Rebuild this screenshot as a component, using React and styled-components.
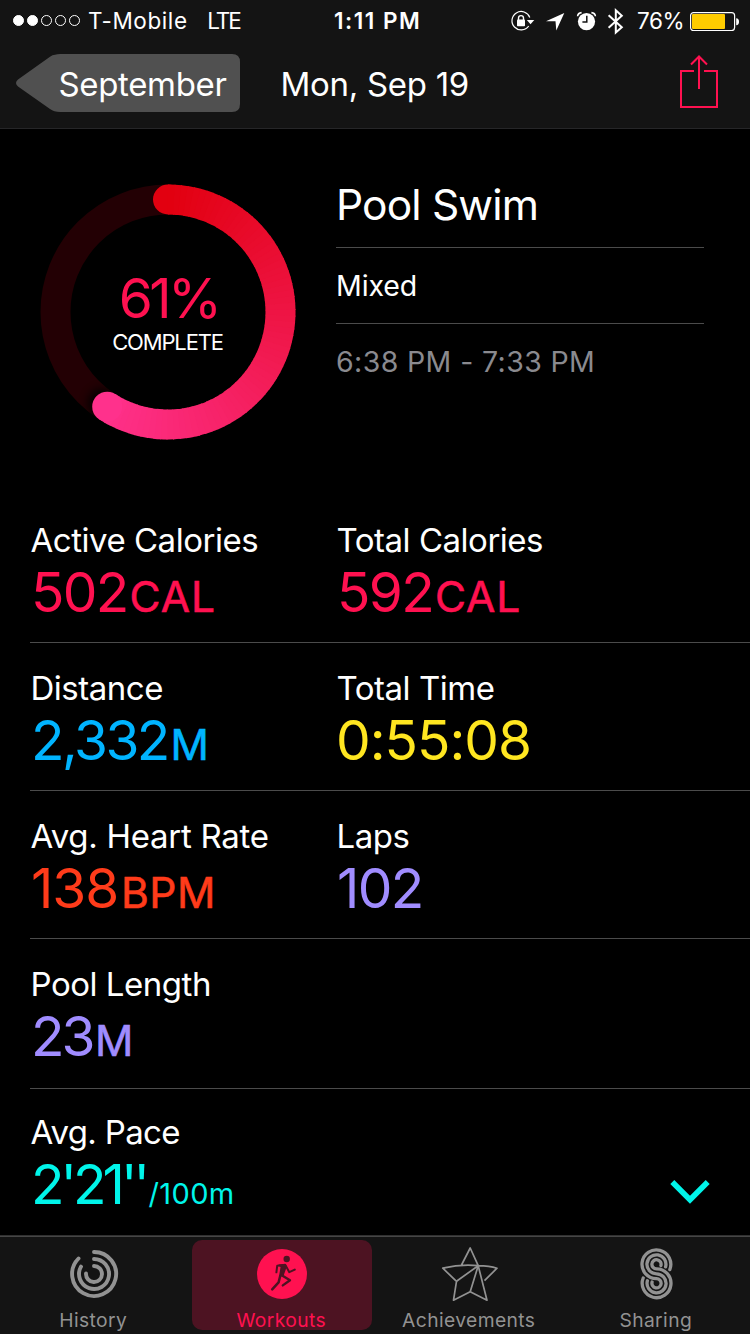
import React from 'react';
import styled, { createGlobalStyle } from 'styled-components';

const GlobalStyle = createGlobalStyle`
  *, *::before, *::after { box-sizing: border-box; }
  body {
    margin: 0;
    background: #000;
    color: #fff;
    font-family: Inter, 'Liberation Sans', sans-serif;
  }
  svg { display: block; flex: none; }
`;

const Screen = styled.div`
  width: 750px;
  height: 1334px;
  display: flex;
  flex-direction: column;
  background: #000;
  overflow: hidden;
  white-space: nowrap;
`;

const Header = styled.header`
  height: 129px;
  background: #141414;
  border-bottom: 1px solid #262628;
`;

const StatusBar = styled.div`
  height: 40px;
  display: grid;
  grid-template-columns: 334px 1fr 240px;
  align-items: center;
  font-size: 22.5px;
  line-height: 40px;
`;

const Carrier = styled.div`
  display: flex;
  align-items: center;
  padding-left: 13px;
`;

const Signal = styled.div`
  display: flex;
  gap: 3px;
  margin-right: 8px;
`;

const Dot = styled.span`
  width: 11px;
  height: 11px;
  border-radius: 50%;
  border: 1px solid #fff;
  background: ${(p) => (p.$on ? '#fff' : 'transparent')};
`;

const StatusText = styled.span`
  padding-top: 1px;
  letter-spacing: ${(p) => p.$spacing || 0}px;
  font-weight: ${(p) => p.$weight || 400};
  margin-left: ${(p) => p.$left || 0}px;
`;

const StatusIcons = styled.div`
  display: flex;
  align-items: center;
`;

const NavBar = styled.nav`
  height: 88px;
  display: flex;
  align-items: flex-start;
  padding: 14px 30px 0 16px;
  font-size: 33px;
  line-height: 60px;
`;

const BackButton = styled.button`
  width: 224px;
  height: 58px;
  padding: 0 0 0 42.5px;
  border: 0;
  background: #505050;
  color: #fff;
  font: inherit;
  line-height: 60px;
  letter-spacing: -0.35px;
  text-align: left;
  clip-path: path('M39 0.8 Q41.5 0 44 0 H216 Q224 0 224 8 V50 Q224 58 216 58 H44 Q38 58 34 55 L2 32.5 Q-2 29 2 25.5 L34 2.8 Q36.5 1 39 0.8 Z');
`;

const NavTitle = styled.h1`
  margin: 0 auto 0 40.6px;
  font: inherit;
  font-weight: 400;
  letter-spacing: -0.3px;
`;

const Hero = styled.section`
  height: 366px;
  display: flex;
  padding: 55px 46px 0 40px;
`;

const RingBox = styled.div`
  width: 256px;
  height: 256px;
  margin-right: 40px;
  display: grid;
  > * { grid-area: 1 / 1; }
`;

const RingText = styled.div`
  display: flex;
  flex-direction: column;
  align-items: center;
  padding-top: 82px;
  z-index: 1;
`;

const Percent = styled.div`
  padding-left: 1px;
  color: #ff1150;
  font-size: 55px;
  font-weight: 400;
  line-height: 64px;
  letter-spacing: -3.6px;
`;

const Complete = styled.div`
  padding-right: 1px;
  font-size: 22px;
  line-height: 24px;
  letter-spacing: -1.15px;
`;

const Summary = styled.div`
  flex: 1;
`;

const SummaryLine = styled.div`
  height: ${(p) => p.$height}px;
  padding-top: ${(p) => p.$top}px;
  border-bottom: ${(p) => (p.$last ? '0' : '1px solid #4b4b4b')};
  color: ${(p) => p.$color || '#fff'};
  font-size: ${(p) => p.$size}px;
  line-height: 40px;
  letter-spacing: ${(p) => p.$spacing}px;
`;

const Metrics = styled.main`
  padding-left: 30px;
  height: 740px;
`;

const MetricRow = styled.section`
  height: ${(p) => p.$height || 148}px;
  margin-top: ${(p) => p.$shift || 0}px;
  padding-top: 25px;
  border-bottom: ${(p) => (p.$last ? '0' : '1px solid #4b4b4b')};
  display: grid;
  grid-template-columns: 306px 1fr;
`;

const Label = styled.div`
  padding-left: 0.5px;
  font-size: 33px;
  line-height: 40px;
  letter-spacing: ${(p) => p.$spacing ?? -0.48}px;
`;

const Value = styled.div`
  margin-top: 4px;
  padding-left: ${(p) => p.$indent ?? 1}px;
  color: ${(p) => p.$color};
  font-size: 55px;
  font-weight: 400;
  line-height: 56px;
  letter-spacing: ${(p) => p.$spacing || 0}px;
`;

const Unit = styled.span`
  margin-left: ${(p) => p.$gap || 0}px;
  font-size: ${(p) => (p.$small ? 29 : 42.5)}px;
  font-weight: 400;
  -webkit-text-stroke: ${(p) => (p.$small ? 0 : 0.6)}px currentColor;
  letter-spacing: ${(p) => p.$spacing || 0}px;
`;

const PaceRow = styled(MetricRow)`
  grid-template-columns: 1fr auto;
  padding-right: 38px;
`;

const Chevron = styled.svg`
  margin-top: 64px;
`;

const TabBar = styled.footer`
  height: 99px;
  background: #141414;
  border-top: 1px solid #303030;
  box-shadow: inset 0 1px 0 #464646;
  display: grid;
  grid-template-columns: 188px 188px 187px 187px;
  justify-items: center;
  padding-top: 4px;
`;

const Tab = styled.div`
  width: 180px;
  height: 90px;
  border-radius: 10px;
  padding-top: 4px;
  display: flex;
  flex-direction: column;
  align-items: center;
  background: ${(p) => (p.$active ? '#4d1322' : 'transparent')};
  color: ${(p) => (p.$active ? '#ff1150' : '#929292')};
`;

const TabLabel = styled.span`
  margin: 4px 1.5px 0 0;
  font-size: 19.25px;
  line-height: 24px;
  letter-spacing: 0.4px;
`;

const START = [226, 0, 16];
const END = [255, 49, 140];
const SWEEP = 212.7;
const STEPS = 72;

const polar = (deg, r = 112.5) => {
  const a = ((deg - 90) * Math.PI) / 180;
  return [128 + r * Math.cos(a), 128 + r * Math.sin(a)];
};
const mix = (t) => `rgb(${START.map((s, i) => Math.round(s + (END[i] - s) * t)).join(',')})`;

function Ring() {
  const step = SWEEP / STEPS;
  const [ex, ey] = polar(SWEEP);
  const [sx, sy] = polar(SWEEP + 3);
  return (
    <svg width="256" height="256" viewBox="0 0 256 256">
      <defs>
        <filter id="soft" x="-50%" y="-50%" width="200%" height="200%">
          <feGaussianBlur stdDeviation="4" />
        </filter>
        <clipPath id="disc"><circle cx="128" cy="128" r="127.5" /></clipPath>
      </defs>
      <circle cx="128" cy="128" r="112.5" fill="none" stroke="#230004" strokeWidth="30" />
      <g clipPath="url(#disc)">
        <circle cx={sx} cy={sy} r="15" fill="#000" opacity="0.8" filter="url(#soft)" />
      </g>
      <circle cx="128" cy="15.5" r="15" fill={mix(0)} />
      {Array.from({ length: STEPS }, (_, i) => {
        const [x1, y1] = polar(i * step);
        const [x2, y2] = polar(Math.min(SWEEP, (i + 1) * step + 0.5));
        return (
          <path key={i} d={`M${x1} ${y1}A112.5 112.5 0 0 1 ${x2} ${y2}`} fill="none" stroke={mix(i / STEPS)} strokeWidth="30" />
        );
      })}
      <circle cx={ex} cy={ey} r="15" fill={mix(1)} />
    </svg>
  );
}

const SystemIcons = () => (
  <svg width="116" height="40" viewBox="510 0 116 40" fill="none" stroke="#fff">
    <path d="M529.8 16.5A9.2 9.2 0 1 0 528.7 25" strokeWidth="1.2" />
    <path d="M526.8 19H534.3L530.5 23.2Z" fill="#fff" stroke="none" />
    <rect x="517" y="18.5" width="8" height="6.8" rx="0.8" fill="#fff" stroke="none" />
    <path d="M518.5 19V17Q518.5 14.6 521 14.6T523.5 17V19" strokeWidth="1.4" />
    <path d="M564.3 12L546 20.2H555.5L556.3 29.5Z" fill="#fff" stroke="none" />
    <circle cx="586.5" cy="20.6" r="8.6" fill="#fff" stroke="none" />
    <path d="M577.6 15.3Q577.8 12 581.6 11.6M591.4 11.6Q595.2 12 595.4 15.3" strokeWidth="1.6" />
    <path d="M586.8 14.8V21H582.4" stroke="#141414" strokeWidth="1.5" />
    <path d="M608.6 14.2L621.8 26.3L615.8 31.6V9.2L621.8 14.7L608.6 26.8" strokeWidth="2" />
  </svg>
);

const BatteryIcon = styled.svg`
  margin-left: 6px;
`;

const Battery = () => (
  <BatteryIcon width="50" height="20" viewBox="0 0 50 20">
    <rect x="0.6" y="1.6" width="44" height="18" rx="3" fill="none" stroke="#fff" strokeWidth="1.2" />
    <rect x="2" y="3.1" width="33" height="15" rx="1" fill="#fc0" />
    <path d="M46.2 7.2Q49 7.5 49 10.7T46.2 14.2Z" fill="#fff" />
  </BatteryIcon>
);

const ShareIcon = () => (
  <svg width="41" height="56" viewBox="679 54 41 56" fill="none" stroke="#ff1150" strokeWidth="2">
    <path d="M694 71H681V107H717V71H704M699 89V56.5M691 64.5L699 56.5L707 64.5" />
  </svg>
);

const HistoryIcon = () => (
  <svg width="60" height="60" viewBox="64 1244 60 60" fill="none" stroke="currentColor" strokeWidth="3.9" strokeLinecap="round">
    <path d="M94 1252A22 22 0 1 1 78.5 1258.5" />
    <path d="M94 1259A15 15 0 1 1 81 1266.6" />
    <path d="M94 1266A8 8 0 1 1 86 1273.5" />
  </svg>
);

const WorkoutIcon = () => (
  <svg width="60" height="60" viewBox="252 1244 60 60" fill="none" stroke="#4d1322" strokeWidth="2.2" strokeLinecap="round" strokeLinejoin="round">
    <circle cx="282" cy="1274" r="25" fill="currentColor" stroke="none" />
    <circle cx="286.7" cy="1259" r="3.2" fill="#4d1322" stroke="none" />
    <path d="M279 1265.3L285 1264.8L286 1266.5L283 1275L279.8 1276.2L281.5 1266.5Z" fill="#4d1322" strokeWidth="1.6" />
    <path d="M276.4 1272.3L277.2 1265.8L285.2 1264.8L289.3 1272.2L294.8 1269.6" strokeWidth="2" />
    <path d="M280.2 1276L278.6 1282.4L272.2 1289.4" strokeWidth="2.5" />
    <path d="M281.7 1275.2L290 1280.2L282.8 1285.4" strokeWidth="2.4" />
  </svg>
);

const AchievementsIcon = () => (
  <svg width="60" height="60" viewBox="439.5 1244 60 60" fill="none" stroke="currentColor" strokeWidth="1.7" strokeLinejoin="round">
    <path d="M461 1265L469.7 1248L477.7 1265.7L486.5 1300.2L469.7 1291.7L453 1300.2L456 1281.3L442.3 1268.2Q461 1263.8 477.7 1265.7Q489 1265.8 496.5 1268.2L484 1280.7" />
    <path d="M456 1281.3L477.7 1265.7L469.7 1291.7" />
  </svg>
);

const SharingIcon = () => (
  <svg width="60" height="60" viewBox="626.5 1244 60 60" fill="none" stroke="currentColor" strokeWidth="3.3" strokeLinecap="round">
    <path d="M669.3 1269.6A14.4 14.4 0 1 0 656 1278.7A4.6 4.6 0 1 1 651.6 1282" />
    <path d="M665.1 1266.8A9.5 9.5 0 1 0 656 1273.8A9.5 9.5 0 1 1 646.9 1280.8" />
    <path d="M660.4 1265.6A4.6 4.6 0 1 0 656 1268.9A14.4 14.4 0 1 1 642.7 1278" />
  </svg>
);

function Metric({ label, value, unit, color, labelSpacing, spacing, indent, unitGap, unitSpacing, small }) {
  return (
    <div>
      <Label $spacing={labelSpacing}>{label}</Label>
      <Value $color={color} $spacing={spacing} $indent={indent}>
        {value}
        {unit && <Unit $small={small} $gap={unitGap} $spacing={unitSpacing}>{unit}</Unit>}
      </Value>
    </div>
  );
}

export default function App() {
  return (
    <Screen>
      <GlobalStyle />
      <Header>
        <StatusBar>
          <Carrier>
            <Signal>
              <Dot $on /><Dot $on /><Dot /><Dot /><Dot />
            </Signal>
            <StatusText $spacing={0.6}>T-Mobile</StatusText>
            <StatusText $left={19.5} $spacing={-2}>LTE</StatusText>
          </Carrier>
          <StatusText $weight={600} $spacing={1.5}>1:11 PM</StatusText>
          <StatusIcons>
            <SystemIcons />
            <StatusText $left={11} $spacing={-0.4}>76%</StatusText>
            <Battery />
          </StatusIcons>
        </StatusBar>
        <NavBar>
          <BackButton>September</BackButton>
          <NavTitle>Mon, Sep 19</NavTitle>
          <ShareIcon />
        </NavBar>
      </Header>
      <Hero>
        <RingBox>
          <Ring />
          <RingText>
            <Percent>61%</Percent>
            <Complete>COMPLETE</Complete>
          </RingText>
        </RingBox>
        <Summary>
          <SummaryLine $height={64} $top={1} $size={42.5} $spacing={-0.85}>Pool Swim</SummaryLine>
          <SummaryLine $height={76} $top={18} $size={28.5} $spacing={-0.1}>Mixed</SummaryLine>
          <SummaryLine $height={76} $top={18} $size={28.5} $spacing={0.38} $color="#8a8a8f" $last>6:38 PM - 7:33 PM</SummaryLine>
        </Summary>
      </Hero>
      <Metrics>
        <MetricRow>
          <Metric label="Active Calories" value="502" unit="CAL" color="#ff1150" spacing={-1.7} unitGap={2} unitSpacing={0.9} />
          <Metric label="Total Calories" value="592" unit="CAL" color="#ff1150" spacing={-1.7} unitGap={2} unitSpacing={0.9} />
        </MetricRow>
        <MetricRow>
          <Metric label="Distance" value="2,332" unit="M" color="#00b4ff" spacing={-2.5} unitGap={2.5} />
          <Metric label="Total Time" value="0:55:08" color="#ffe620" spacing={-1} indent={0} />
        </MetricRow>
        <MetricRow>
          <Metric label="Avg. Heart Rate" value="138" unit="BPM" color="#ff3b1a" labelSpacing={-0.28} spacing={-1} unitGap={2.5} unitSpacing={0.6} />
          <Metric label="Laps" value="102" color="#a08cff" spacing={-1.7} />
        </MetricRow>
        <MetricRow $height={150}>
          <Metric label="Pool Length" value="23" unit="M" color="#a08cff" spacing={-3} unitGap={2.5} />
        </MetricRow>
        <PaceRow $shift={-2} $last>
          <Metric label="Avg. Pace" value={"2'21''"} unit="/100m" color="#00f5ea" labelSpacing={-0.65} spacing={-4} unitGap={2.5} unitSpacing={0.4} small />
          <Chevron width="44" height="32" viewBox="668 1176 44 32" fill="none" stroke="#00f5ea" strokeWidth="5.6">
            <path d="M672.3 1182L690 1199.7L707.7 1182" />
          </Chevron>
        </PaceRow>
      </Metrics>
      <TabBar>
        <Tab><HistoryIcon /><TabLabel>History</TabLabel></Tab>
        <Tab $active><WorkoutIcon /><TabLabel>Workouts</TabLabel></Tab>
        <Tab><AchievementsIcon /><TabLabel>Achievements</TabLabel></Tab>
        <Tab><SharingIcon /><TabLabel>Sharing</TabLabel></Tab>
      </TabBar>
    </Screen>
  );
}
